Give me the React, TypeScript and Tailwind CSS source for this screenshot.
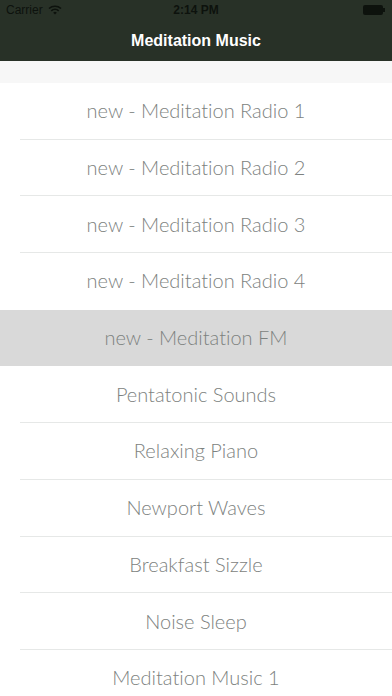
import React from 'react';

const stations = [
  'new - Meditation Radio 1',
  'new - Meditation Radio 2',
  'new - Meditation Radio 3',
  'new - Meditation Radio 4',
  'new - Meditation FM',
  'Pentatonic Sounds',
  'Relaxing Piano',
  'Newport Waves',
  'Breakfast Sizzle',
  'Noise Sleep',
  'Meditation Music 1',
  'Meditation Music 2',
];

const selectedIndex = 4;

// Status bar with carrier, time and battery
const StatusBar: React.FC = () => (
  <div className="h-5 flex items-center justify-between px-[6px] text-[12px] text-[#0d120d] font-['Liberation_Sans',sans-serif]">
    <div className="flex items-center gap-[5px] w-[120px]">
      <span>Carrier</span>
      <svg width="14" height="10" viewBox="0 0 14 10">
        <path d="M1 3.5a9 9 0 0 1 12 0" stroke="#0d120d" strokeWidth="1.6" fill="none" />
        <path d="M3.3 5.8a5.6 5.6 0 0 1 7.4 0" stroke="#0d120d" strokeWidth="1.6" fill="none" />
        <path d="M7 9.5 5.2 7.7a2.6 2.6 0 0 1 3.6 0Z" fill="#0d120d" />
      </svg>
    </div>
    <span className="font-bold">2:14 PM</span>
    <div className="w-[120px] flex justify-end items-center pr-[1px]">
      <div className="w-[20px] h-[10px] bg-[#0d120d] rounded-[2px]" />
      <div className="w-[2px] h-[4px] bg-[#0d120d]" />
    </div>
  </div>
);

export default function App() {
  return (
    <div className="w-[392px] h-[696px] overflow-hidden bg-white">
      <div className="bg-[#283127]">
        <StatusBar />
        <div className="h-[41px] flex items-center justify-center text-white text-[16px] font-bold font-['Liberation_Sans',sans-serif]">
          Meditation Music
        </div>
      </div>
      <div className="h-[22px] bg-[#f7f7f7]" />
      <div className="font-['Lato',sans-serif] font-light [font-variant-ligatures:none]">
        {stations.map((name, i) => (
          <div
            key={name}
            className={
              i === selectedIndex
                ? 'h-[56.7px] pb-[2px] flex items-center justify-center bg-[#d9d9d9] text-[20px] text-[#7d8280]'
                : 'relative h-[56.7px] pb-[2px] flex items-center justify-center text-[20px] text-[#7d8280]'
            }
          >
            {name}
            {i !== selectedIndex && i !== selectedIndex - 1 && (
              <div className="absolute left-5 right-0 bottom-0 h-px bg-[#e6e8e7]" />
            )}
          </div>
        ))}
      </div>
    </div>
  );
}
